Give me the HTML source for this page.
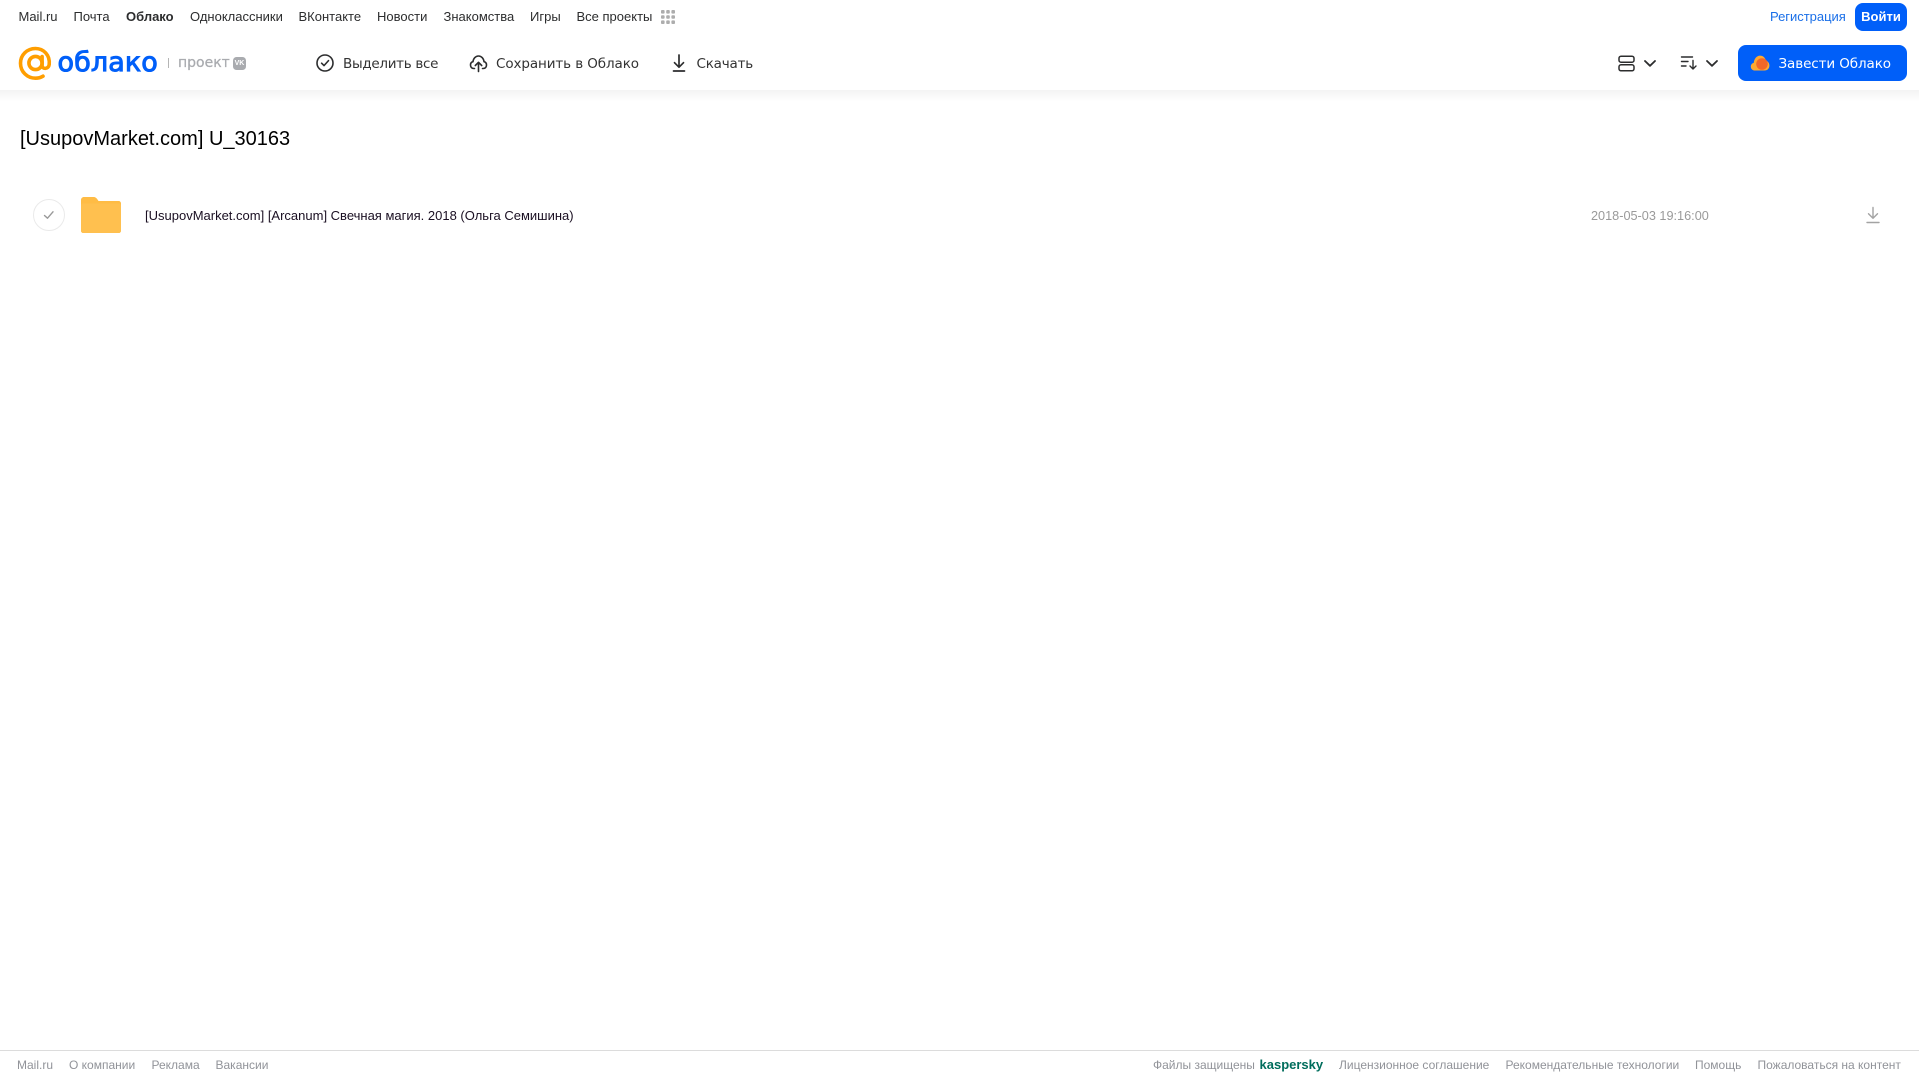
<!DOCTYPE html>
<html lang="ru">
<head>
<meta charset="utf-8">
<title>Облако</title>
<style>
html,body{margin:0;padding:0;background:#fff;width:1919px;height:1079px;overflow:hidden}
body{position:relative;font-family:"Liberation Sans",Arial,sans-serif}
.t{position:absolute;white-space:nowrap;line-height:20px;height:20px}
.n{top:7px;font-size:13px;color:#2c2d2e}
.tb{top:53.500px;font-family:"DejaVu Sans",sans-serif;font-size:13.500px;color:#333;letter-spacing:-.3px}
.f{top:1055px;font-size:12px;color:#919399}
svg{position:absolute;display:block}
</style>
</head>
<body>
<div style="position:absolute;left:0;top:90px;width:1919px;height:12px;background:linear-gradient(#f3f3f3,#fff)"></div>

<span class="t n" style="left:18.500px">Mail.ru</span>
<span class="t n" style="left:73.500px">Почта</span>
<span class="t n" style="left:126px;font-weight:700">Облако</span>
<span class="t n" style="left:190px">Одноклассники</span>
<span class="t n" style="left:298.500px">ВКонтакте</span>
<span class="t n" style="left:377px">Новости</span>
<span class="t n" style="left:443.500px">Знакомства</span>
<span class="t n" style="left:530px">Игры</span>
<span class="t n" style="left:576.500px">Все проекты</span>
<svg style="left:660px;top:9px" width="16" height="16" viewBox="0 0 16 16" fill="#adadad"><rect x="1" y="1" width="3.600" height="3.600" rx="1"/><rect x="6.200" y="1" width="3.600" height="3.600" rx="1"/><rect x="11.400" y="1" width="3.600" height="3.600" rx="1"/><rect x="1" y="6.200" width="3.600" height="3.600" rx="1"/><rect x="6.200" y="6.200" width="3.600" height="3.600" rx="1"/><rect x="11.400" y="6.200" width="3.600" height="3.600" rx="1"/><rect x="1" y="11.400" width="3.600" height="3.600" rx="1"/><rect x="6.200" y="11.400" width="3.600" height="3.600" rx="1"/><rect x="11.400" y="11.400" width="3.600" height="3.600" rx="1"/></svg>

<span class="t n" style="left:1770px;color:#1a6fe8;letter-spacing:-.02px">Регистрация</span>
<div style="position:absolute;left:1855px;top:3px;width:52px;height:28px;border-radius:8px;background:#005ff9;color:#fff;font-size:13px;font-weight:700;line-height:28px;text-align:center">Войти</div>

<svg style="left:18px;top:46px" width="35" height="35" viewBox="0 0 35 35" fill="none" stroke="#ff9e00"><circle cx="17.500" cy="17" r="6.600" stroke-width="3.600"/><path d="M24.100 10.500V19.500C24.100 23.500 30.600 23.500 31.200 18.500C32.200 9 25.500 2.500 17.500 2.500C9 2.500 2.500 9 2.500 17.200C2.500 26 9.500 32.200 17.500 32.200C20.500 32.200 22.800 31.500 25 30.200" stroke-width="3.600" stroke-linecap="round"/></svg>
<span class="t" style="left:57.500px;top:47px;height:32px;line-height:32px;font-family:'DejaVu Sans',sans-serif;font-size:27px;font-weight:400;-webkit-text-stroke:1px #005ff9;color:#005ff9;letter-spacing:.1px">облако</span>
<div style="position:absolute;left:168px;top:58px;width:1px;height:10px;background:#b5b5b5"></div>
<span class="t" style="left:178px;top:53px;font-family:'DejaVu Sans',sans-serif;font-size:14px;-webkit-text-stroke:.25px #a9abaf;color:#a9abaf">проект</span>
<div style="position:absolute;left:233px;top:57px;width:13px;height:13px;border-radius:3.500px;background:#a9abaf;color:#fff;font-size:7px;font-weight:700;line-height:13px;text-align:center">VK</div>

<svg style="left:315px;top:53px" width="20" height="20" viewBox="0 0 20 20" fill="none" stroke="#2c2d2e" stroke-width="1.600"><circle cx="10" cy="10" r="8"/><path d="M6.600 10.200L9 12.600L13.500 7.600" stroke-linecap="round" stroke-linejoin="round"/></svg>
<span class="t tb" style="left:343px">Выделить все</span>
<svg style="left:468px;top:53px" width="21" height="20" viewBox="0 0 21 20" fill="none" stroke="#2c2d2e" stroke-width="1.600" stroke-linecap="round" stroke-linejoin="round"><path d="M6.500 15.500H5.800C3.600 15.500 2.500 13.800 2.500 12C2.500 10.200 3.500 9 5 8.700C5.300 5.500 7.500 3 10.500 3C13.500 3 15.700 5.500 16 8.700C17.500 9 18.500 10.200 18.500 12C18.500 13.800 17.400 15.500 15.200 15.500H14.500"/><path d="M10.500 18.500V9.500M7.300 12.500L10.500 9.300L13.700 12.500"/></svg>
<span class="t tb" style="left:496px;letter-spacing:-.1px">Сохранить в Облако</span>
<svg style="left:670px;top:53px" width="18" height="20" viewBox="0 0 18 20" fill="none" stroke="#2c2d2e" stroke-width="1.700" stroke-linecap="round" stroke-linejoin="round"><path d="M9 2V14M4.500 9.700L9 14.200L13.500 9.700"/><path d="M3.500 18H14.500"/></svg>
<span class="t tb" style="left:696.500px;letter-spacing:-.2px">Скачать</span>

<svg style="left:1618px;top:55px" width="17" height="17" viewBox="0 0 17 17" fill="none" stroke="#2c2d2e" stroke-width="1.500"><rect x="1" y="1.200" width="15" height="6" rx="2"/><rect x="1" y="9.800" width="15" height="6" rx="2"/></svg>
<svg style="left:1643px;top:59px" width="14" height="9" viewBox="0 0 14 9" fill="none" stroke="#2c2d2e" stroke-width="1.800" stroke-linecap="round" stroke-linejoin="round"><path d="M2 2L7 6.800L12 2"/></svg>
<svg style="left:1680px;top:55px" width="18" height="16" viewBox="0 0 18 16" fill="none" stroke="#2c2d2e" stroke-width="1.400" stroke-linecap="round" stroke-linejoin="round"><path d="M1.500 2H12.500M1.500 6.500H8M1.500 11H6"/><path d="M13 5.500V14M10 11L13 14L16 11"/></svg>
<svg style="left:1705px;top:59px" width="14" height="9" viewBox="0 0 14 9" fill="none" stroke="#2c2d2e" stroke-width="1.800" stroke-linecap="round" stroke-linejoin="round"><path d="M2 2L7 6.800L12 2"/></svg>

<div style="position:absolute;left:1738px;top:45px;width:169px;height:36px;border-radius:8px;background:#005ff9"></div>
<svg style="left:1750px;top:54px" width="20" height="18" viewBox="0 0 20 18"><path d="M5 16.500C2.500 16.500 .8 14.800 .8 12.600C.8 10.600 2.200 9.200 3.800 8.800C4 5 6.700 1.600 10 1.600C13.200 1.600 15.400 4 15.900 6.800C18 7.200 19.400 9.200 19.400 11.600C19.400 14.400 17.400 16.500 14.600 16.500Z" fill="#ffa930"/><circle cx="12" cy="10" r="5.800" fill="#f2682a"/></svg>
<span class="t" style="left:1778.500px;top:53.500px;font-family:'DejaVu Sans',sans-serif;font-size:13.500px;color:#fff;letter-spacing:-.1px">Завести Облако</span>

<span class="t" style="left:20px;top:126px;height:26px;line-height:26px;font-size:20px;color:#000">[UsupovMarket.com] U_30163</span>

<div style="position:absolute;left:33px;top:199px;width:30px;height:30px;border:1px solid #eaeaea;border-radius:50%"></div>
<svg style="left:42px;top:208px" width="14" height="14" viewBox="0 0 14 14" fill="none" stroke="#999" stroke-width="1.400" stroke-linecap="round" stroke-linejoin="round"><path d="M2.500 7.500L5.500 10.200L11 3.800"/></svg>
<svg style="left:81px;top:197px" width="40" height="36" viewBox="0 0 40 36"><path d="M0 3C0 1.300 1.300 0 3 0H12.500C14.500 0 15.500 1 16.500 2.500L17.500 4H37.500C39 4 40 5 40 6.500V33.500C40 35 39 36 37.500 36H2.500C1 36 0 35 0 33.500Z" fill="#ffbc45"/><path d="M0 8.500C0 7.500 .8 6.500 2 6.500H38C39.200 6.500 40 7.500 40 8.500V33.500C40 35 39 36 37.500 36H2.500C1 36 0 35 0 33.500Z" fill="#ffc04f"/></svg>
<span class="t" style="left:145px;top:206px;font-size:13px;color:#1a0f22">[UsupovMarket.com] [Arcanum] Свечная магия. 2018 (Ольга Семишина)</span>
<span class="t" style="left:1591px;top:206px;font-size:12.700px;color:#9a9a9a">2018-05-03 19:16:00</span>
<svg style="left:1865px;top:206px" width="16" height="18" viewBox="0 0 16 18" fill="none" stroke="#a3a3a3" stroke-width="1.400" stroke-linecap="round" stroke-linejoin="round"><path d="M8 1.500V12M3.500 7.800L8 12.300L12.500 7.800"/><path d="M2 16.500H14"/></svg>

<div style="position:absolute;left:0;top:1050px;width:1919px;height:1px;background:#dcdcdc"></div>
<span class="t f" style="left:17px">Mail.ru</span>
<span class="t f" style="left:69px">О компании</span>
<span class="t f" style="left:151.500px">Реклама</span>
<span class="t f" style="left:215.500px">Вакансии</span>
<span class="t f" style="left:1153px">Файлы защищены</span>
<span class="t f" style="left:1259.500px;color:#006d5c;font-weight:700;font-size:13px">kaspersky</span>
<span class="t f" style="left:1339px">Лицензионное соглашение</span>
<span class="t f" style="left:1505.500px">Рекомендательные технологии</span>
<span class="t f" style="left:1695px">Помощь</span>
<span class="t f" style="left:1757.500px">Пожаловаться на контент</span>
</body>
</html>
